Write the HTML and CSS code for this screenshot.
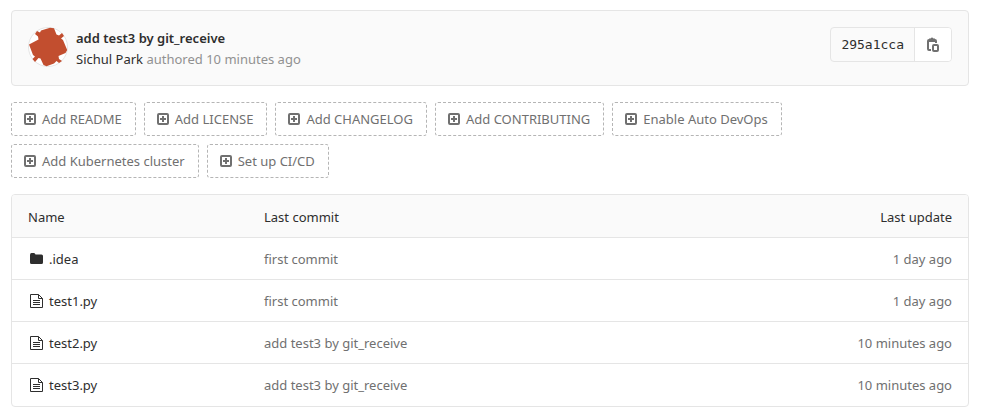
FILE: index.html
```html
<!DOCTYPE html>
<html lang="en">
<head>
<meta charset="utf-8">
<meta name="viewport" content="width=device-width, initial-scale=1">
<title>Repository files</title>
<link rel="stylesheet" href="styles.css">
</head>
<body>
<svg class="sprite" aria-hidden="true">
  <symbol id="plus-square" viewBox="0 0 12 12"><rect x="1" y="1" width="10" height="10" rx="1" fill="none" stroke="currentColor" stroke-width="2"/><path d="M5 3h2v2h2v2H7v2H5V7H3V5h2z" fill="currentColor"/></symbol>
  <symbol id="folder" viewBox="0 0 14 14"><path d="M0 3Q0 1 1.500 1H4Q5 1 5.500 2.500H11.500Q13 2.500 13 4v6.500Q13 12 11.500 12H1.500Q0 12 0 10.500z" fill="currentColor"/></symbol>
  <symbol id="file" viewBox="0 0 14 14"><path d="M.5.5h8l4 4v9H.5zM8.500.5v4h4M3 6.500h7M3 8.500h7M3 10.500h7" fill="none" stroke="currentColor"/></symbol>
</svg>
<main class="page">
  <section class="commit">
    <svg class="avatar" viewBox="0 0 40 40" role="img" aria-label="Sichul Park">
      <circle cx="20" cy="20" r="19.500" fill="#fff" stroke="#e5e5e5"/>
      <path d="M1 17.500L10.500 12.500 10 9.500 7 7 9 4 12 5.500 13 3.500 22 .7 26 1.200 28.500 7.500 31 8.500 34 6 36 9 33 11.500 35 13 39.200 23 37.500 26 30.500 29 31 32 34 34 31 36 28.500 34 26 36.500 18.500 39.300 15.500 38 12.500 31.500 10.500 31 7 35 4.500 32 7 29.500 5 28z" fill="#c24e2f"/>
    </svg>
    <div class="commit-text">
      <a class="commit-title" href="#">add test3 by git_receive</a>
      <div class="byline"><a href="#">Sichul Park</a> authored <time>10 minutes ago</time></div>
    </div>
    <div class="sha-group">
      <span class="sha">295a1cca</span>
      <button class="copy" type="button" aria-label="Copy commit SHA">
        <svg width="14" height="16" viewBox="0 0 14 16" fill="none" stroke="currentColor" stroke-width="2"><path d="M5 13H3Q2 13 2 12V4Q2 3 3 3H9Q10 3 10 4V6"/><path d="M3 1.500H4.500Q6-.5 7.500 1.500H9V5H3zM5.500 2v1h1V2z" fill="currentColor" fill-rule="evenodd" stroke="none"/><rect x="7" y="8" width="5" height="6" rx="1"/></svg>
      </button>
    </div>
  </section>
  <nav class="actions" aria-label="Project setup">
    <a href="#"><svg><use href="#plus-square"/></svg>Add README</a>
    <a href="#"><svg><use href="#plus-square"/></svg>Add LICENSE</a>
    <a href="#"><svg><use href="#plus-square"/></svg>Add CHANGELOG</a>
    <a href="#"><svg><use href="#plus-square"/></svg>Add CONTRIBUTING</a>
    <a href="#"><svg><use href="#plus-square"/></svg>Enable Auto DevOps</a>
    <a href="#"><svg><use href="#plus-square"/></svg>Add Kubernetes cluster</a>
    <a href="#"><svg><use href="#plus-square"/></svg>Set up CI/CD</a>
  </nav>
  <table class="files">
    <thead><tr><th>Name</th><th>Last commit</th><th>Last update</th></tr></thead>
    <tbody>
      <tr><td><a href="#"><svg><use href="#folder"/></svg>.idea</a></td><td><a href="#">first commit</a></td><td><time>1 day ago</time></td></tr>
      <tr><td><a href="#"><svg><use href="#file"/></svg>test1.py</a></td><td><a href="#">first commit</a></td><td><time>1 day ago</time></td></tr>
      <tr><td><a href="#"><svg><use href="#file"/></svg>test2.py</a></td><td><a href="#">add test3 by git_receive</a></td><td><time>10 minutes ago</time></td></tr>
      <tr><td><a href="#"><svg><use href="#file"/></svg>test3.py</a></td><td><a href="#">add test3 by git_receive</a></td><td><time>10 minutes ago</time></td></tr>
    </tbody>
  </table>
</main>
</body>
</html>
```
FILE: styles.css
```css
* { box-sizing: border-box; }
body {
  margin: 0;
  background: #fff;
  color: #2e2e2e;
  font: 13px/20px "Noto Sans", "Open Sans", sans-serif;
}
a { color: inherit; text-decoration: none; }
svg { flex: none; }
.sprite { display: none; }
.page {
  display: flex;
  flex-direction: column;
  gap: 16px;
  padding: 10px 14px 5px 11px;
}
.commit {
  display: flex;
  align-items: flex-start;
  gap: 8px;
  padding: 16px 16px 15px;
  border: 1px solid #e5e5e5;
  border-radius: 4px;
  background: #fafafa;
}
.avatar { width: 40px; height: 40px; }
.commit-text { flex: 1; line-height: 21px; padding-top: 1px; }
.commit-title { display: block; font-weight: 600; }
.byline { color: #919191; }
.byline a { color: #2e2e2e; }
.sha-group {
  display: flex;
  height: 35px;
  border: 1px solid #e5e5e5;
  border-radius: 4px;
  overflow: hidden;
}
.sha {
  padding: 7px 10px;
  font-family: "DejaVu Sans Mono", monospace;
}
.copy {
  display: flex;
  align-items: center;
  padding: 0 11px;
  border: 0;
  border-left: 1px solid #e5e5e5;
  background: #fff;
  color: #707070;
}
.actions { display: flex; flex-wrap: wrap; gap: 8px; }
.actions a {
  display: flex;
  align-items: center;
  gap: 6px;
  height: 34px;
  padding: 0 13px 0 12px;
  border: 1px dashed #b5b5b5;
  border-radius: 3px;
  color: #707070;
}
.actions svg { width: 12px; height: 12px; }
.files {
  width: 100%;
  border: 1px solid #e5e5e5;
  border-radius: 4px;
  border-spacing: 0;
  table-layout: fixed;
}
th, td {
  height: 42px;
  padding: 0 16px;
  border-top: 1px solid #e5e5e5;
  text-align: left;
  font-weight: 400;
}
th { padding-top: 2px; border-top: 0; background: #fafafa; }
th:first-child { width: 236px; border-top-left-radius: 3px; }
th:last-child { border-top-right-radius: 3px; }
td { color: #707070; }
tr:last-child td { height: 43px; }
th:last-child, td:last-child { width: 25%; text-align: right; }
td:first-child a {
  display: flex;
  align-items: center;
  gap: 5px;
  padding-left: 2px;
  color: #2e2e2e;
}
.files svg { width: 14px; height: 14px; }
```
